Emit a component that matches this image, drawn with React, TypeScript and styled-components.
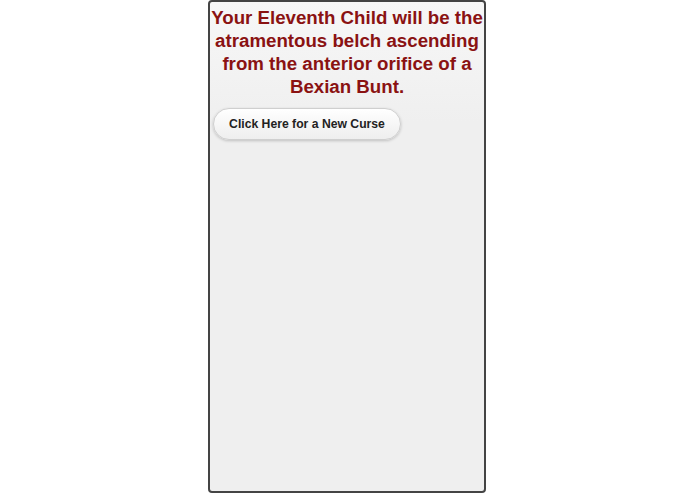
import styled, { createGlobalStyle } from 'styled-components';

const GlobalStyle = createGlobalStyle`
  html, body {
    margin: 0;
    padding: 0;
    background: #ffffff;
  }
  #root {
    height: 494px;
  }
`;

const App = () => {
  return (
    <>
      <GlobalStyle />
      <Page>
        <Phone>
          <Curse>
            Your Eleventh Child will be the atramentous belch ascending from the anterior
            orifice of a Bexian Bunt.
          </Curse>
          <CurseButton type="button">Click Here for a New Curse</CurseButton>
        </Phone>
      </Page>
    </>
  );
};

export default App;

const Page = styled.div`
  display: flex;
  justify-content: center;
  height: 494px;
  padding-right: 1px;
`;

const Phone = styled.div`
  width: 278px;
  height: 493px;
  box-sizing: border-box;
  border: 2px solid #444444;
  border-radius: 4px;
  background: linear-gradient(#f7f7f7, #efefef 120px, #efefef);
  display: flex;
  flex-direction: column;
  align-items: flex-start;
  padding: 4px 0 0 0;
  font-family: 'Liberation Sans', Arial, sans-serif;
`;

const Curse = styled.h1`
  margin: 0;
  width: 100%;
  text-align: center;
  color: #8a1212;
  font-size: 18.7px;
  line-height: 23px;
  font-weight: bold;
`;

const CurseButton = styled.button`
  margin-top: 10px;
  margin-left: 3px;
  width: 188px;
  height: 32px;
  border: 1px solid #cfcfcf;
  border-radius: 16px;
  background: linear-gradient(#ffffff, #eeeeee);
  box-shadow: 0 1px 3px rgba(0, 0, 0, 0.2);
  font-family: 'Liberation Sans', Arial, sans-serif;
  font-size: 12.2px;
  font-weight: bold;
  color: #222222;
  cursor: pointer;
`;
